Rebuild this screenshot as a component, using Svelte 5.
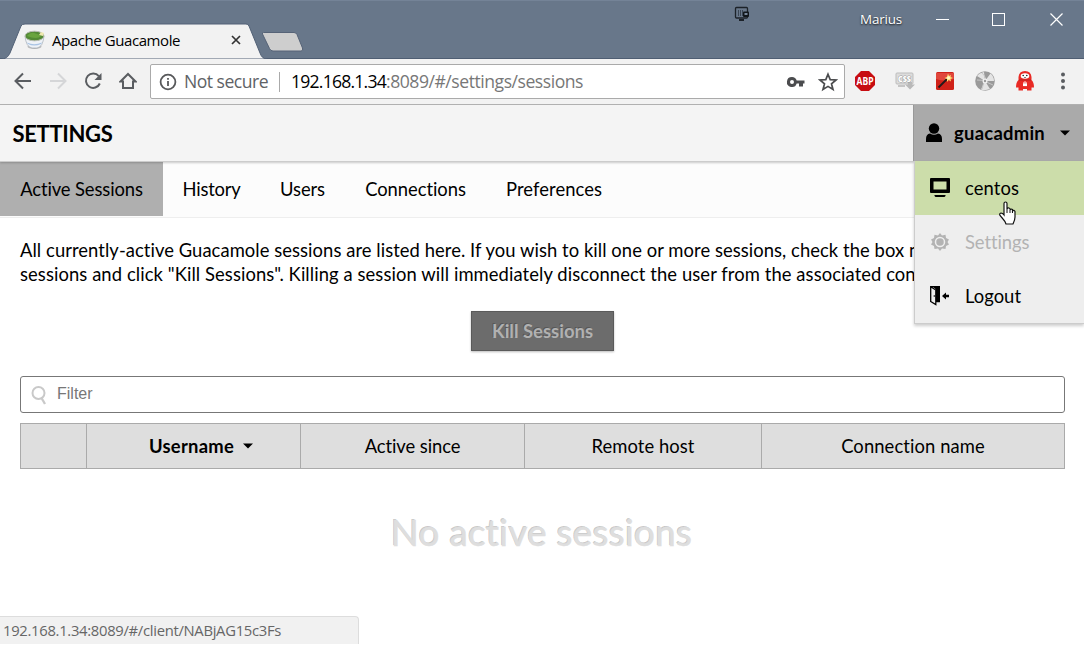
<script>
  const tabs = [
    { label: 'Active Sessions', width: 163, text: 123 },
    { label: 'History', width: 97, text: 58 },
    { label: 'Users', width: 85, text: 45 },
    { label: 'Connections', width: 141, text: 101 },
    { label: 'Preferences', width: 136, text: 96 }
  ];
  const columns = [
    { label: '', width: 66 },
    { label: 'Username', width: 214, sorted: true, text: 85 },
    { label: 'Active since', width: 224, text: 96 },
    { label: 'Remote host', width: 237, text: 103 },
    { label: 'Connection name', width: 303, text: 144 }
  ];

  // Justifies a line of text to a fixed measure.
  function measure(node, width) {
    const apply = () => {
      node.style.letterSpacing = '0px';
      const natural = node.getBoundingClientRect().width;
      node.style.letterSpacing = `${(width - natural) / node.textContent.length}px`;
    };
    apply();
    document.fonts?.ready.then(apply);
  }
</script>

<div class="window">
  <header class="titlebar">
    <svg class="tabshape" width="310" height="36" viewBox="0 0 310 36">
      <path d="M0 36 C6 36 8 34 10 30 L21 3 Q22 1 25 1 H246 Q248 1 249 3 L260 30 Q262 36 267 36Z" fill="#f2f2f2" stroke="#526176" stroke-width="1" />
      <path d="M263.500 9.500 H294 Q296 9.500 297 11.500 L302.500 25 Q303.500 28 301 28 H273 Q270.500 28 269.500 25.500 L262.500 11 Q262 9.500 263.500 9.500Z" fill="#cecece" stroke="#566377" />
    </svg>
    <div class="tab">
      <svg width="22" height="20" viewBox="0 0 22 20">
        <ellipse cx="10.500" cy="16.500" rx="7" ry="2.500" fill="#b9b9b9" />
        <path d="M1 6 Q2 17 8 18 H13 Q19 17 20 6Z" fill="#eef2f7" stroke="#a5adb6" stroke-width=".7" />
        <path d="M3 12.500 Q10 16 18 12.500 L17 14 Q10 17 4 14Z" fill="#a9c4e4" />
        <ellipse cx="10.500" cy="6" rx="9.500" ry="4.800" fill="#538a35" stroke="#b8bdb3" />
        <path d="M3 6 Q6 2 10 3 T17 6 Q13 10 3 6" fill="#69a43e" />
        <path d="M15 5 L17 2 L20 3 L19 6Z" fill="#efe8ae" />
      </svg>
      <span class="tabname"><span use:measure={128}>Apache Guacamole</span></span>
      <svg width="10" height="10" viewBox="0 0 10 10"><path d="M1 1L9 9M9 1L1 9" stroke="#333" stroke-width="1.700" /></svg>
    </div>
    <div class="controls">
      <svg class="monitor" width="16" height="16" viewBox="0 0 16 16"><rect x="1.500" y="1.500" width="12" height="10.500" rx="1" fill="none" stroke="#1c2229" stroke-width="1.300" /><path d="M4.500 4V10M6.500 4V10M8.500 4V10" stroke="#3b4654" /><rect x="9" y="5.500" width="6" height="5.500" rx="1" fill="#11161b" /><rect x="10.500" y="7" width="3" height="2" fill="#77869a" /><path d="M5 14H10" stroke="#1c2229" stroke-width="2" /></svg>
      <span class="person"><span use:measure={42}>Marius</span></span>
      <svg width="13" height="13" viewBox="0 0 13 13"><path d="M0 6.500H13" stroke="#fff" /></svg>
      <svg width="13" height="13" viewBox="0 0 13 13"><rect x=".5" y=".5" width="12" height="12" fill="none" stroke="#fff" /></svg>
      <svg width="13" height="13" viewBox="0 0 13 13"><path d="M.5 .5L12.500 12.500M12.500 .5L.5 12.500" stroke="#fff" stroke-width="1.200" /></svg>
    </div>
  </header>

  <div class="toolbar">
    <div class="nav">
      <svg width="18" height="18" viewBox="0 0 18 18"><path d="M17 9H2M9 1.500L1.500 9L9 16.500" fill="none" stroke="#5a5d61" stroke-width="2" /></svg>
      <svg width="18" height="18" viewBox="0 0 18 18"><path d="M1 9H16M9 1.500L16.500 9L9 16.500" fill="none" stroke="#d5d6d8" stroke-width="2" /></svg>
      <svg width="18" height="18" viewBox="0 0 18 18"><path d="M14.800 4.200A7.200 7.200 0 1 0 15.800 11.500" fill="none" stroke="#5a5d61" stroke-width="2" /><path d="M17.500 1V8H10.500Z" fill="#5a5d61" /></svg>
      <svg width="18" height="18" viewBox="0 0 18 18"><path d="M1.500 9.500L9 2L16.500 9.500H14V16H4V9.500Z" fill="none" stroke="#5a5d61" stroke-width="2" /></svg>
    </div>
    <div class="address">
      <svg class="info" width="18" height="18" viewBox="0 0 18 18"><circle cx="9" cy="9" r="7.400" fill="none" stroke="#58595b" stroke-width="1.800" /><path d="M9 8V13M9 5V6.800" stroke="#58595b" stroke-width="1.800" /></svg>
      <span class="insecure"><span use:measure={84}>Not secure</span></span>
      <span class="url"><span class="host" use:measure={95}>192.168.1.34</span><span use:measure={197}>:8089/#/settings/sessions</span></span>
      <svg width="20" height="12" viewBox="0 0 20 12"><path fill-rule="evenodd" d="M6 1A5 5 0 1 0 10.700 7.500H13V10.500H17V7.500H18.500V4.500H10.700A5 5 0 0 0 6 1ZM6 4A2 2 0 1 1 6 8A2 2 0 1 1 6 4" fill="#4b4c4e" /></svg>
      <svg class="star" width="20" height="20" viewBox="0 0 20 20"><path d="M10 2.200L12.200 7.600L18 8L13.500 11.800L15 17.500L10 14.400L5 17.500L6.500 11.800L2 8L7.800 7.600Z" fill="none" stroke="#4b4c4e" stroke-width="1.700" /></svg>
    </div>
    <div class="extensions">
      <svg width="20" height="20" viewBox="0 0 20 20"><path d="M6 0H14L20 6V14L14 20H6L0 14V6Z" fill="#c70d12" /><text x="1.500" y="13.600" class="abp" textLength="17" lengthAdjust="spacingAndGlyphs">ABP</text></svg>
      <svg width="20" height="20" viewBox="0 0 20 20"><rect x="1" y="2" width="17" height="11" rx="1" fill="#dcdcdc" stroke="#bdbdbd" /><path d="M3 15H10" stroke="#c5c5c5" stroke-width="2" /><path d="M13 11H17V13.500H20L15 18.500L10 13.500H13Z" fill="#b9b9b9" /><text x="3" y="10.800" class="css" textLength="13" lengthAdjust="spacingAndGlyphs">CSS</text></svg>
      <svg width="20" height="20" viewBox="0 0 20 20"><rect x="1" y="1" width="18" height="18" rx="1.500" fill="#cf2118" /><path d="M1 2H19V8Q10 11 1 8" fill="#e0463b" /><path d="M3.500 16.500L12 8" stroke="#21191b" stroke-width="1.800" /><path d="M13 2.500L14 5L16 4L15.500 6L18 7L15.500 8L16 10.500L13.700 9L12 11V8L9.500 7L12 6Z" fill="#ffe070" /><circle cx="13.500" cy="6.800" r="1.500" fill="#fff6cc" /></svg>
      <svg width="20" height="20" viewBox="0 0 20 20"><circle cx="10" cy="10" r="9.800" fill="#9a9a9a" /><path d="M10 10L2 5Q4 2 9 1Z M10 10L15.500 2.500Q19 5.500 19 10Z M10 10L15 18Q10 20 6 18.500Z" fill="#e4e4e4" /><path d="M7 2Q12 7 10 10T7 18M2 9Q9 9 10 10T18 14" fill="none" stroke="#c8c8c8" /><circle cx="10" cy="10" r="2.500" fill="#f1f1f1" /><circle cx="10" cy="10" r="1.200" fill="#9a9a9a" /></svg>
      <svg width="20" height="20" viewBox="0 0 20 20"><path d="M3.500 9V6Q4 0 10 0T16.500 6V9Q19 11 19 16.500H16.500V19.500H12V18H8V19.500H3.500V16.500H1Q1 11 3.500 9Z" fill="#e92a25" /><ellipse cx="10" cy="5" rx="4.300" ry="2.800" fill="#fff" /><circle cx="8.200" cy="4.500" r=".8" fill="#222" /><circle cx="11.800" cy="4.500" r=".8" fill="#222" /><path d="M9 6.300Q10 7 11 6.300" fill="none" stroke="#222" stroke-width=".6" /><path d="M4 9H16" stroke="#b9201f" /><rect x="8" y="12.300" width="4" height="2.800" fill="#fff" /><path d="M8.900 12.500V11H11.100V12.500" stroke="#fff" stroke-width=".8" fill="none" /></svg>
      <svg class="dots" width="6" height="20" viewBox="0 0 6 20"><circle cx="3" cy="3.500" r="2" fill="#5a5d61" /><circle cx="3" cy="10" r="2" fill="#5a5d61" /><circle cx="3" cy="16.500" r="2" fill="#5a5d61" /></svg>
    </div>
  </div>

  <main>
    <div class="heading">
      <h1><span use:measure={100}>SETTINGS</span></h1>
      <div class="user">
        <svg width="18" height="20" viewBox="0 0 18 20"><circle cx="9" cy="5.500" r="5.200" fill="#000" /><path d="M1 19V16Q1 11 5 10.500Q9 13 13 10.500Q17 11 17 16V19Z" fill="#000" /></svg>
        <span class="username"><span use:measure={91}>guacadmin</span></span>
        <svg width="10" height="6" viewBox="0 0 10 6"><path d="M0 .5H10L5 5.500Z" /></svg>
        <ul class="menu">
          <li class="active">
            <svg width="20" height="20" viewBox="0 0 20 20"><path fill-rule="evenodd" d="M1 0H19Q20 0 20 1V14Q20 15 19 15H1Q0 15 0 14V1Q0 0 1 0ZM3.500 3.500V11.500H16.500V3.500Z" /><path d="M4.500 17H15.500V18L14.500 19H5.500L4.500 18Z" /></svg>
            <span use:measure={54}>centos</span>
          </li>
          <li class="disabled">
            <svg width="20" height="20" viewBox="0 0 20 20"><path d="M10 1L12 3.500L15.500 2.800L16 6L19 7.500L17.500 10L19 12.500L16 14L15.500 17L12 16.500L10 19L8 16.500L4.500 17L4 14L1 12.500L2.500 10L1 7.500L4 6L4.500 2.800L8 3.500Z" fill="#b3b3b3" /><circle cx="10" cy="10" r="4.500" fill="#b3b3b3" stroke="#eee" stroke-width="1.500" /></svg>
            <span use:measure={64}>Settings</span>
          </li>
          <li>
            <svg width="20" height="20" viewBox="0 0 20 20"><path d="M.7 16V.7H9.300V15.500H6.500M.7 .7L5.800 4V18.500L.7 15.500" fill="#eee" stroke="#000" stroke-width="1.300" /><path d="M2 0H10V16H6V3.500Z" /><circle cx="4.300" cy="10" r=".8" /><path d="M19 8.800V11.200H16V13.500L12 10L16 6.500V8.800Z" /></svg>
            <span use:measure={56}>Logout</span>
          </li>
        </ul>
      </div>
    </div>

    <nav class="sections">
      {#each tabs as tab, i}
        <div class="section" class:current={i === 0} style:width="{tab.width}px"><span use:measure={tab.text}>{tab.label}</span></div>
      {/each}
    </nav>

    <div class="content">
      <p><span use:measure={884.5}>All currently-active Guacamole sessions are listed here. If you wish to kill one or more sessions, check the box</span><span>{' next'}</span><br /><span use:measure={861.5}>sessions and click "Kill Sessions". Killing a session will immediately disconnect the user from the associated</span><span>{' connect'}</span></p>
      <button disabled><span use:measure={101}>Kill Sessions</span></button>
      <div class="filter">
        <svg width="16" height="20" viewBox="0 0 16 20"><circle cx="7.500" cy="7" r="6" fill="none" stroke="#c9c9c9" stroke-width="2" /><path d="M10.500 12L14 18" stroke="#c9c9c9" stroke-width="2.300" /></svg>
        <span>Filter</span>
      </div>
      <div class="table">
        {#each columns as column}
          <div class="cell" class:sorted={column.sorted} style:width="{column.width}px">
            {#if column.label}<span use:measure={column.text}>{column.label}</span>{/if}
            {#if column.sorted}<svg width="10" height="6" viewBox="0 0 10 6"><path d="M0 .5H10L5 5.500Z" /></svg>{/if}
          </div>
        {/each}
      </div>
      <div class="empty"><span use:measure={302}>No active sessions</span></div>
    </div>
  </main>

  <div class="status"><span use:measure={278}>192.168.1.34:8089/#/client/NABjAG15c3Fs</span></div>
  <svg class="cursor" width="18" height="24" viewBox="0 0 18 24"><path d="M5 14V2.500Q5 1 6.500 1T8 2.500V8Q8.500 6.500 10 7T11 9Q12 7.500 13.500 8.500V10Q15 8.500 16 10.500V16Q16 19 14 23H7Q6 20 4 18L1 14.500Q0 12.500 2 12Q3.500 12 5 14Z" fill="#fff" stroke="#111" stroke-width="1.200" /><path d="M8 8V12M11 9V12M13.500 10V12" stroke="#111" /></svg>
</div>

<style>
  :global(body) { margin: 0; overflow: hidden; }
  * { box-sizing: border-box; }
  svg { display: block; flex-shrink: 0; }
  span { white-space: pre; }
  .window { position: relative; width: 1084px; height: 645px; overflow: hidden; display: flex; flex-direction: column; background: #fff; color: #000; font-family: Lato, Carlito, sans-serif; font-size: 18.4px; }
  .titlebar { position: relative; height: 59px; background: #68778a; border-top: 1px solid #748397; border-bottom: 1px solid #4f5e73; display: flex; justify-content: space-between; font-family: "Open Sans", sans-serif; }
  .tabshape { position: absolute; left: 0; top: 22px; }
  .tab { position: relative; width: 243px; padding: 21px 0 0 24px; display: flex; align-items: center; height: 57px; font-size: 15px; }
  .tabname { margin-left: 6px; width: 179px; line-height: 20px; margin-top: -1px; }
  .controls { display: flex; padding: 12px 21px 0 0; color: #fff; font-size: 13.400px; }
  .controls svg { margin-left: 44px; }
  .controls .person + svg { margin-left: 34px; }
  .controls .person + svg + svg { margin-left: 43px; }
  .controls .person + svg + svg + svg { margin-left: 45px; }
  .controls .monitor { margin: -7px 110px 0 0; }
  .person { margin-top: -4px; height: 20px; line-height: 20px; text-shadow: 0 1px 2px #111; }
  .toolbar { height: 46px; background: #f2f2f2; border-bottom: 1px solid #b3b3b3; display: flex; align-items: center; padding: 0 0 1px 14px; font-family: "Open Sans", sans-serif; }
  .nav { display: flex; gap: 17px; width: 136px; }
  .address { height: 35px; width: 695px; border: 1px solid #aaa; border-radius: 2px; background: #fff; display: flex; align-items: center; font-size: 17.6px; margin-top: 1px; }
  .info { margin-left: 8px; }
  .insecure { margin-left: 7px; width: 96px; height: 20px; line-height: 19px; border-right: 1px solid #aaa; color: #606266; }
  .url { margin-left: 11px; width: 495px; padding-bottom: 2px; color: #777; }
  .host { color: #000; }
  .star { margin-left: 12px; }
  .extensions { margin-left: 10px; display: flex; gap: 20px; }
  .abp { font: 700 10px "Open Sans", sans-serif; fill: #fff; }
  .css { font: 800 8.500px "Open Sans", sans-serif; fill: #fff; stroke: #999; stroke-width: 1px; paint-order: stroke; }
  .dots { margin-left: 5px; }
  .heading { height: 57px; background: #f4f4f4; border-bottom: 1px solid #ccc; box-shadow: 0 1px 2px #0003; display: flex; justify-content: space-between; position: relative; z-index: 2; }
  h1 { margin: 0 0 0 12.5px; line-height: 57px; font-size: 22px; font-weight: 700; }
  .user { position: relative; width: 171px; height: 56px; background: #aaa; border-left: 1px solid #999; display: flex; align-items: center; padding-left: 11px; font-weight: 700; }
  .username { margin-left: 11px; width: 106px; }
  .menu { position: absolute; right: 0; top: 56px; margin: 0; padding: 0; list-style: none; width: 170px; height: 163px; background: #eee; border: solid #ccc; border-width: 0 0 1px 1px; box-shadow: 0 2px 3px #0003; font-weight: 400; }
  .menu li { height: 54px; padding: 0 0 0 15px; display: flex; align-items: center; gap: 15px; }
  .menu .active { background: #cda; }
  .menu .disabled { color: #b3b3b3; }
  .sections { display: flex; height: 56px; background: #fcfcfc; border-bottom: 1px solid #eee; }
  .section { height: 54px; display: flex; justify-content: center; align-items: center; }
  .current { background: #afafaf; }
  .content { padding: 20px 19px 20px 20px; display: flex; flex-direction: column; }
  p { margin: 0; height: 73px; line-height: 24px; }
  button { align-self: center; display: flex; align-items: center; justify-content: center; width: 143px; height: 40px; border: 1px solid #5a5a5a; background: #6c6c6c; box-shadow: 0 1px 2px #0004; color: #b1b1b1; font: 700 18.4px Lato, sans-serif; text-shadow: -1px -1px #0003; padding: 0; }
  .filter { margin-top: 25px; height: 37px; border: 1px solid #777; border-radius: 3px; display: flex; align-items: center; font: 16px "Liberation Sans", sans-serif; color: #777; padding: 0 0 2px 10px; gap: 10px; }
  .filter svg { margin-top: 4px; }
  .table { display: flex; margin-top: 10px; height: 46px; border: 1px solid #aaa; background: #dedede; }
  .cell { flex-shrink: 0; display: flex; align-items: center; justify-content: center; border-right: 1px solid #aaa; }
  .cell:last-child { border: 0; padding-right: 1px; }
  .sorted { font-weight: 700; gap: 9px; padding-left: 15px; }
  .empty { height: 72px; margin-top: 27px; text-align: center; line-height: 72px; font-size: 36.8px; color: #dedede; -webkit-text-stroke: .5px #dedede; text-shadow: -1px -1px #00000038; padding-right: 2px; }
  .status { position: absolute; left: 0; bottom: 1px; width: 359px; height: 28px; background: #f1f1f1; border: solid #ddd; border-width: 1px 1px 0 0; border-top-right-radius: 4px; padding-left: 3px; color: #666; font: 14.8px/26px "Open Sans", sans-serif; }
  .cursor { position: absolute; left: 999px; top: 201px; z-index: 5; }
</style>
